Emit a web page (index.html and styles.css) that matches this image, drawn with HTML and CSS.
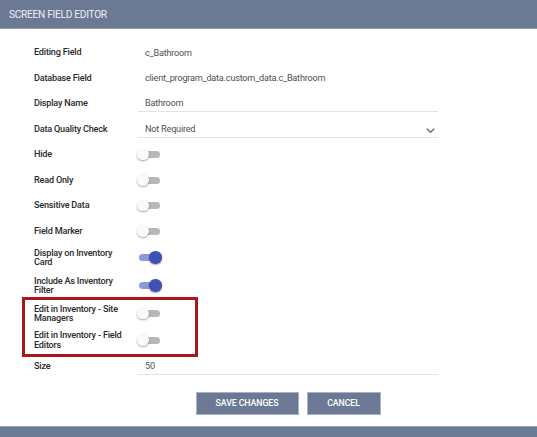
FILE: index.html
```html
<!DOCTYPE html>
<html lang="en">
<head>
<meta charset="utf-8">
<title>Screen Field Editor</title>
<link rel="stylesheet" href="styles.css">
</head>
<body>
<div class="page">
  <header class="topbar">SCREEN FIELD EDITOR</header>
  <main class="form">
    <div class="row"><div class="label">Editing Field</div><div class="value">c_Bathroom</div></div>
    <div class="row"><div class="label">Database Field</div><div class="value">client_program_data.custom_data.c_Bathroom</div></div>
    <div class="row"><div class="label">Display Name</div><div class="value input">Bathroom</div></div>
    <div class="row"><div class="label">Data Quality Check</div><div class="value input select"><span>Not Required</span>
      <svg class="chev" width="9" height="5" viewBox="0 0 9 5"><path d="M0.8 0.8 L4.5 4.2 L8.2 0.8" fill="none" stroke="#666" stroke-width="1.4"/></svg></div></div>
    <div class="row"><div class="label">Hide</div><div class="toggle"><span class="track"></span><span class="knob"></span></div></div>
    <div class="row"><div class="label">Read Only</div><div class="toggle"><span class="track"></span><span class="knob"></span></div></div>
    <div class="row"><div class="label">Sensitive Data</div><div class="toggle"><span class="track"></span><span class="knob"></span></div></div>
    <div class="row"><div class="label">Field Marker</div><div class="toggle"><span class="track"></span><span class="knob"></span></div></div>
    <div class="row tall"><div class="label">Display on Inventory Card</div><div class="toggle on"><span class="track"></span><span class="knob"></span></div></div>
    <div class="row tall"><div class="label">Include As Inventory Filter</div><div class="toggle on"><span class="track"></span><span class="knob"></span></div></div>
    <div class="highlight">
      <div class="row tall"><div class="label">Edit in Inventory - Site Managers</div><div class="toggle"><span class="track"></span><span class="knob"></span></div></div>
      <div class="row tall"><div class="label">Edit in Inventory - Field Editors</div><div class="toggle"><span class="track"></span><span class="knob"></span></div></div>
    </div>
    <div class="row size"><div class="label">Size</div><div class="value input">50</div></div>
    <div class="actions">
      <button class="btn save">SAVE CHANGES</button>
      <button class="btn cancel">CANCEL</button>
    </div>
  </main>
  <footer class="bottombar"></footer>
</div>
</body>
</html>
```
FILE: styles.css
```css
html, body {
  margin: 0;
  padding: 0;
  background: #ffffff;
}
body {
  font-family: Roboto, "Liberation Sans", Arial, sans-serif;
  width: 537px;
  height: 437px;
  overflow: hidden;
}
.page {
  display: flex;
  flex-direction: column;
  height: 437px;
}
.topbar {
  height: 28px;
  flex: none;
  background: #6c7995;
  border-bottom: 1px solid #8d98ae;
  color: #eef0f4;
  font-size: 10.2px;
  letter-spacing: -0.3px;
  display: flex;
  align-items: center;
  padding-left: 9px;
}
.form {
  flex: 1;
  padding: 10.75px 0 0 34px;
  display: flex;
  flex-direction: column;
}
.row {
  display: flex;
  align-items: center;
  height: 25.5px;
  flex: none;
}
.row.tall {
  height: 28px;
}
.label {
  width: 104px;
  flex: none;
  font-size: 9.1px;
  letter-spacing: -0.2px;
  font-weight: 500;
  color: #2a2a2a;
  line-height: 9.5px;
  padding-right: 14px;
  padding-top: 1px;
  box-sizing: border-box;
}
.value {
  font-size: 9.1px;
  letter-spacing: -0.2px;
  color: #505050;
  padding-left: 7px;
  line-height: 14px;
}
.input {
  width: 300px;
  box-sizing: border-box;
  border-bottom: 1px solid #e4e4e4;
  padding-bottom: 1px;
  margin-top: 1px;
}
.select {
  display: flex;
  align-items: center;
  justify-content: space-between;
  padding-right: 3px;
}
.chev {
  display: block;
  margin-top: 3px;
}
.toggle {
  position: relative;
  width: 24px;
  height: 12px;
  flex: none;
  margin-left: -1px;
}
.track {
  position: absolute;
  left: 2px;
  top: 2.5px;
  width: 21px;
  height: 7px;
  border-radius: 4px;
  background: #b8b8b8;
}
.knob {
  position: absolute;
  left: 0;
  top: 0;
  width: 11.5px;
  height: 11.5px;
  border-radius: 50%;
  background: #fafafa;
  box-shadow: 0 1px 2px rgba(0,0,0,0.35);
}
.toggle.on .track {
  background: #8e99d8;
}
.toggle.on .knob {
  left: 12px;
  width: 12.5px;
  height: 12.5px;
  top: -0.75px;
  background: #3f51b5;
}
.highlight {
  margin-left: -12px;
  margin-top: -2.5px;
  width: 176px;
  box-sizing: border-box;
  border: 3px solid #a8181b;
  padding: 0 0 1px 9px;
  flex: none;
}
.highlight .row.tall {
  height: 26.5px;
}
.row.size {
  height: 18px;
}
.actions {
  display: flex;
  justify-content: center;
  gap: 8px;
  width: 300px;
  margin-left: 104px;
  margin-top: 16.5px;
}
.btn {
  font-family: Roboto, "Liberation Sans", Arial, sans-serif;
  font-size: 8.8px;
  letter-spacing: -0.1px;
  font-weight: 500;
  color: #ffffff;
  background: #6c7995;
  border: 1px solid #a9b2c3;
  height: 23px;
  padding: 0;
  cursor: pointer;
}
.save {
  width: 103px;
}
.cancel {
  width: 74px;
}
.bottombar {
  height: 10px;
  flex: none;
  margin-top: auto;
  background: #6c7995;
  border-top: 1px solid #9aa4b8;
}
```
